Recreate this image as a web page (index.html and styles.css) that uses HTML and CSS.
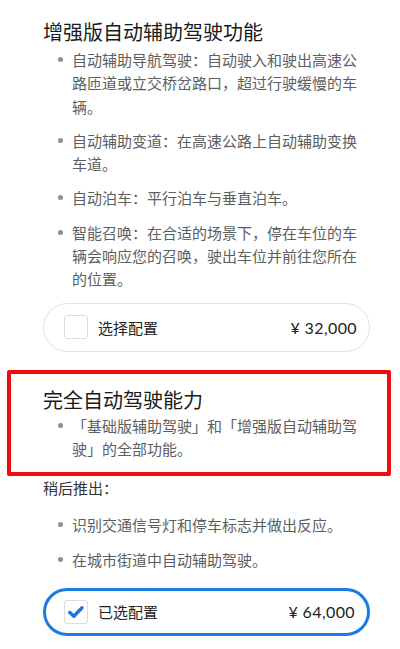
FILE: index.html
```html
<!DOCTYPE html>
<html lang="zh-CN">
<head>
  <meta charset="UTF-8">
  <title>自动辅助驾驶选项</title>
  <link rel="stylesheet" href="styles.css">
</head>
<body>
  <div class="page">
    <section class="feature">
      <h2>增强版自动辅助驾驶功能</h2>
      <ul class="points">
        <li>自动辅助导航驾驶：自动驶入和驶出高速公路匝道或立交桥岔路口，超过行驶缓慢的车辆。</li>
        <li>自动辅助变道：在高速公路上自动辅助变换车道。</li>
        <li>自动泊车：平行泊车与垂直泊车。</li>
        <li>智能召唤：在合适的场景下，停在车位的车辆会响应您的召唤，驶出车位并前往您所在的位置。</li>
      </ul>
      <label class="option">
        <span class="check"></span>
        <span class="option-name">选择配置</span>
        <span class="price">¥ 32,000</span>
      </label>
    </section>

    <section class="feature">
      <div class="highlight">
        <h2>完全自动驾驶能力</h2>
        <ul class="points">
          <li>「基础版辅助驾驶」和「增强版自动辅助驾驶」的全部功能。</li>
        </ul>
      </div>
      <p class="later">稍后推出：</p>
      <ul class="points later-list">
        <li>识别交通信号灯和停车标志并做出反应。</li>
        <li>在城市街道中自动辅助驾驶。</li>
      </ul>
      <label class="option selected">
        <span class="check">
          <svg width="18" height="18" viewBox="0 0 18 18"><path d="M2.8 9.4 L6.9 13.2 L15 4.8" fill="none" stroke="#1b74e4" stroke-width="3.4" stroke-linecap="round" stroke-linejoin="round"/></svg>
        </span>
        <span class="option-name">已选配置</span>
        <span class="price">¥ 64,000</span>
      </label>
    </section>
  </div>
</body>
</html>
```

FILE: styles.css
```css
body {
  margin: 0;
  background: #fff;
  font-family: "Noto Sans CJK SC", "Noto Sans", sans-serif;
  color: #222;
}
.page {
  width: 327px;
  margin-left: 43px;
  padding-top: 18px;
}
h2 {
  margin: 0 0 2px;
  font-size: 20px;
  line-height: 28px;
  font-weight: 400;
  color: #171a20;
}
.points {
  list-style: none;
  margin: 0;
  padding: 0 0 0 29px;
}
.points li {
  position: relative;
  font-size: 15px;
  line-height: 23.3px;
  color: #5c5e62;
  margin-bottom: 11px;
}
.points li:last-child {
  margin-bottom: 0;
}
.points li::before {
  content: "";
  position: absolute;
  left: -14px;
  top: 9px;
  width: 5px;
  height: 5px;
  border-radius: 50%;
  background: #8e8e8e;
}
.option {
  display: flex;
  align-items: center;
  box-sizing: border-box;
  height: 49px;
  margin-top: 12px;
  padding: 0 12px 0 20px;
  border: 1px solid #e2e2e2;
  border-radius: 25px;
  font-size: 15px;
}
.option.selected {
  margin-top: 17px;
  height: 48px;
  padding-left: 18px;
  border: 3px solid #1b7be4;
}
.check {
  display: flex;
  align-items: center;
  justify-content: center;
  box-sizing: border-box;
  width: 24px;
  height: 24px;
  border: 1px solid #dcdcdc;
  border-radius: 3px;
  background: #fff;
}
.option-name {
  margin-left: 10px;
  color: #222;
}
.price {
  margin-left: auto;
  font-family: Lato, "Noto Sans", sans-serif;
  font-size: 16px;
  letter-spacing: 0.4px;
  color: #222;
}
.feature + .feature {
  margin-top: 18px;
}
.highlight {
  margin: 0 -21px 0 -36px;
  padding: 12px 17px 12px 32px;
  border: 4px solid #ee0c0c;
  border-radius: 2px;
}
.highlight h2 {
  margin-bottom: 0;
}
.later {
  margin: 0;
  font-size: 15px;
  line-height: 23px;
  color: #333;
}
.later-list {
  margin-top: 14px;
}
```
